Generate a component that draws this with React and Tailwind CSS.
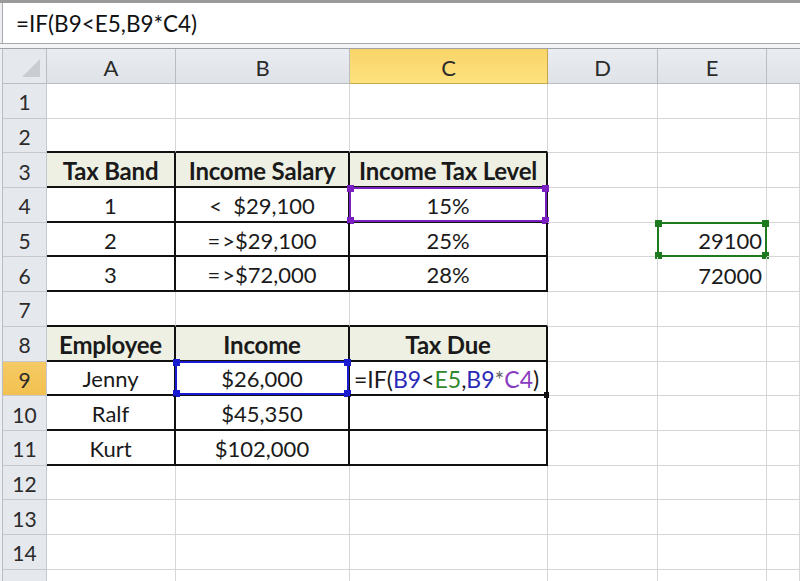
import React from 'react';

const FONT = { fontFamily: 'Lato, "Open Sans", Arial, sans-serif' };

// column widths: left strip, row header, A..F
const COLS = 'grid-cols-[3px_44px_129px_174px_198px_110px_109px_1fr]';

// Range highlight box with the four little square handles
function RefBox({ color }) {
  const box = {
    purple: 'border-[#7a1fc0]',
    green: 'border-[#1e7a1e]',
    blue: 'border-[#1a1ad0]',
  }[color];
  const dot = {
    purple: 'bg-[#7a1fc0]',
    green: 'bg-[#1e7a1e]',
    blue: 'bg-[#1a1ad0]',
  }[color];
  return (
    <div className={`absolute -inset-px border-2 ${box} pointer-events-none`}>
      <span className={`absolute -left-[4px] -top-[4px] w-[7px] h-[7px] ${dot}`} />
      <span className={`absolute -right-[4px] -top-[4px] w-[7px] h-[7px] ${dot}`} />
      <span className={`absolute -left-[4px] -bottom-[4px] w-[7px] h-[7px] ${dot}`} />
      <span className={`absolute -right-[4px] -bottom-[4px] w-[7px] h-[7px] ${dot}`} />
    </div>
  );
}

function Cell({ children, className = '', align = 'center' }) {
  const a = align === 'right' ? 'justify-end pr-1' : align === 'left' ? 'justify-start pl-1' : 'justify-center';
  return (
    <div className={`relative flex items-center pt-[3px] leading-[26px] overflow-visible ${a} text-[22px] text-[#1a1a1a] border-r border-b border-[#d6d6d6] ${className}`}>
      {children}
    </div>
  );
}

function RowHead({ n, active }) {
  return (
    <>
      <div className="bg-[#eceef1] border-r border-[#b9bcc2]" />
      <div
        className={`flex items-center justify-center pt-[3px] leading-[26px] text-[21px] text-[#2b2b2b] border-r border-b border-[#c5c9cf] ${
          active ? 'bg-gradient-to-b from-[#f5c964] to-[#f3c150]' : 'bg-[#e5e8ec]'
        }`}
      >
        {n}
      </div>
    </>
  );
}

const tbl = 'border-r-2 border-b-2 border-r-[#111] border-b-[#111]';
const above = 'border-b-2 border-b-[#111]';
const head = 'bg-[#eef0e3] font-bold text-[24px] tracking-[-0.2px]';

export default function App() {
  const rows = [];
  const h = 'h-[34.7px]';

  rows.push(
    <React.Fragment key="r1">
      <RowHead n={1} />
      <Cell className={h} /><Cell className={h} /><Cell className={h} /><Cell className={h} /><Cell className={h} /><Cell className={h} />
    </React.Fragment>
  );
  rows.push(
    <React.Fragment key="r2">
      <RowHead n={2} />
      <Cell className={`${h} ${above}`} /><Cell className={`${h} ${above}`} /><Cell className={`${h} ${above}`} /><Cell className={h} /><Cell className={h} /><Cell className={h} />
    </React.Fragment>
  );
  rows.push(
    <React.Fragment key="r3">
      <RowHead n={3} />
      <Cell className={`${h} ${tbl} ${head}`}>Tax Band</Cell>
      <Cell className={`${h} ${tbl} ${head}`}>Income Salary</Cell>
      <Cell className={`${h} ${tbl} ${head} whitespace-nowrap`}>Income Tax Level</Cell>
      <Cell className={h} /><Cell className={h} /><Cell className={h} />
    </React.Fragment>
  );
  rows.push(
    <React.Fragment key="r4">
      <RowHead n={4} />
      <Cell className={`${h} ${tbl}`}>1</Cell>
      <Cell className={`${h} ${tbl}`}>&lt;&nbsp; $29,100</Cell>
      <Cell className={`${h} ${tbl}`}>15%<RefBox color="purple" /></Cell>
      <Cell className={h} /><Cell className={h} /><Cell className={h} />
    </React.Fragment>
  );
  rows.push(
    <React.Fragment key="r5">
      <RowHead n={5} />
      <Cell className={`${h} ${tbl}`}>2</Cell>
      <Cell className={`${h} ${tbl}`}>=<span className="ml-[2px]">&gt;</span>$29,100</Cell>
      <Cell className={`${h} ${tbl}`}>25%</Cell>
      <Cell className={h} />
      <Cell className={h} align="right">29100<RefBox color="green" /></Cell>
      <Cell className={h} />
    </React.Fragment>
  );
  rows.push(
    <React.Fragment key="r6">
      <RowHead n={6} />
      <Cell className={`${h} ${tbl}`}>3</Cell>
      <Cell className={`${h} ${tbl}`}>=<span className="ml-[2px]">&gt;</span>$72,000</Cell>
      <Cell className={`${h} ${tbl}`}>28%</Cell>
      <Cell className={h} />
      <Cell className={h} align="right">72000</Cell>
      <Cell className={h} />
    </React.Fragment>
  );
  rows.push(
    <React.Fragment key="r7">
      <RowHead n={7} />
      <Cell className={`${h} ${above}`} /><Cell className={`${h} ${above}`} /><Cell className={`${h} ${above}`} /><Cell className={h} /><Cell className={h} /><Cell className={h} />
    </React.Fragment>
  );
  rows.push(
    <React.Fragment key="r8">
      <RowHead n={8} />
      <Cell className={`${h} ${tbl} ${head}`}>Employee</Cell>
      <Cell className={`${h} ${tbl} ${head}`}>Income</Cell>
      <Cell className={`${h} ${tbl} ${head}`}>Tax Due</Cell>
      <Cell className={h} /><Cell className={h} /><Cell className={h} />
    </React.Fragment>
  );
  rows.push(
    <React.Fragment key="r9">
      <RowHead n={9} active />
      <Cell className={`${h} ${tbl}`}>Jenny</Cell>
      <Cell className={`${h} ${tbl}`}>$26,000<RefBox color="blue" /></Cell>
      <Cell className={`${h} ${tbl} z-10 text-[23px]`} align="left">
        <span className="whitespace-nowrap">
          =IF(<span className="text-[#2a2ab8]">B9</span>&lt;<span className="text-[#2e8a2e]">E5</span>,<span className="text-[#2a2ab8]">B9</span><span className="text-[#666]">*</span><span className="text-[#8a3cc0]">C4</span>)
        </span>
        <span className="absolute -right-[3px] -bottom-[4px] w-[5px] h-[6px] bg-[#111]" />
      </Cell>
      <Cell className={h} /><Cell className={h} /><Cell className={h} />
    </React.Fragment>
  );
  rows.push(
    <React.Fragment key="r10">
      <RowHead n={10} />
      <Cell className={`${h} ${tbl}`}>Ralf</Cell>
      <Cell className={`${h} ${tbl}`}>$45,350</Cell>
      <Cell className={`${h} ${tbl}`} />
      <Cell className={h} /><Cell className={h} /><Cell className={h} />
    </React.Fragment>
  );
  rows.push(
    <React.Fragment key="r11">
      <RowHead n={11} />
      <Cell className={`${h} ${tbl}`}>Kurt</Cell>
      <Cell className={`${h} ${tbl}`}>$102,000</Cell>
      <Cell className={`${h} ${tbl}`} />
      <Cell className={h} /><Cell className={h} /><Cell className={h} />
    </React.Fragment>
  );
  [12, 13, 14, 15].forEach((n) => {
    rows.push(
      <React.Fragment key={'r' + n}>
        <RowHead n={n} />
        <Cell className={h} /><Cell className={h} /><Cell className={h} /><Cell className={h} /><Cell className={h} /><Cell className={h} />
      </React.Fragment>
    );
  });

  return (
    <div className="w-[800px] h-[581px] overflow-hidden bg-white" style={FONT}>
      {/* formula bar */}
      <div className="h-[3px] bg-[#9a9a9a]" />
      <div className="h-[41px] flex bg-white border-b border-[#a9a9a9]">
        <div className="w-[3px] bg-[#eceef1] border-r border-[#a9a9a9]" />
        <div className="flex items-center pl-[13px] pt-[2px] text-[22.5px] text-[#111]">=IF(B9&lt;E5,B9*C4)</div>
      </div>
      <div className="h-[5px] bg-[#f3f4f6] border-b border-[#9ea2a8]" />

      {/* sheet */}
      <div className={`grid ${COLS}`}>
        {/* column headers */}
        <div className="h-[35px] bg-[#eceef1] border-r border-[#b9bcc2]" />
        <div className="h-[35px] relative bg-[#e5e8ec] border-r border-b border-[#b9bcc2]">
          <svg className="absolute right-[6px] bottom-[6px]" width="18" height="18" viewBox="0 0 18 18">
            <polygon points="18,0 18,18 0,18" fill="#c9ccd1" />
          </svg>
        </div>
        <div className="h-[35px] flex items-center justify-center pt-[3px] leading-[26px] text-[22px] text-[#2b2b2b] bg-gradient-to-b from-[#e9ecf0] to-[#dfe3e8] border-r border-b border-[#b9bcc2]">A</div>
        <div className="h-[35px] flex items-center justify-center pt-[3px] leading-[26px] text-[22px] text-[#2b2b2b] bg-gradient-to-b from-[#e9ecf0] to-[#dfe3e8] border-r border-b border-[#b9bcc2]">B</div>
        <div className="h-[35px] flex items-center justify-center pt-[3px] leading-[26px] text-[22px] text-[#2b2b2b] bg-gradient-to-b from-[#f9d468] to-[#fde27e] border-r border-b border-[#c9a64a]">C</div>
        <div className="h-[35px] flex items-center justify-center pt-[3px] leading-[26px] text-[22px] text-[#2b2b2b] bg-gradient-to-b from-[#e9ecf0] to-[#dfe3e8] border-r border-b border-[#b9bcc2]">D</div>
        <div className="h-[35px] flex items-center justify-center pt-[3px] leading-[26px] text-[22px] text-[#2b2b2b] bg-gradient-to-b from-[#e9ecf0] to-[#dfe3e8] border-r border-b border-[#b9bcc2]">E</div>
        <div className="h-[35px] bg-gradient-to-b from-[#e9ecf0] to-[#dfe3e8] border-b border-[#b9bcc2]" />
        {rows}
      </div>
    </div>
  );
}
